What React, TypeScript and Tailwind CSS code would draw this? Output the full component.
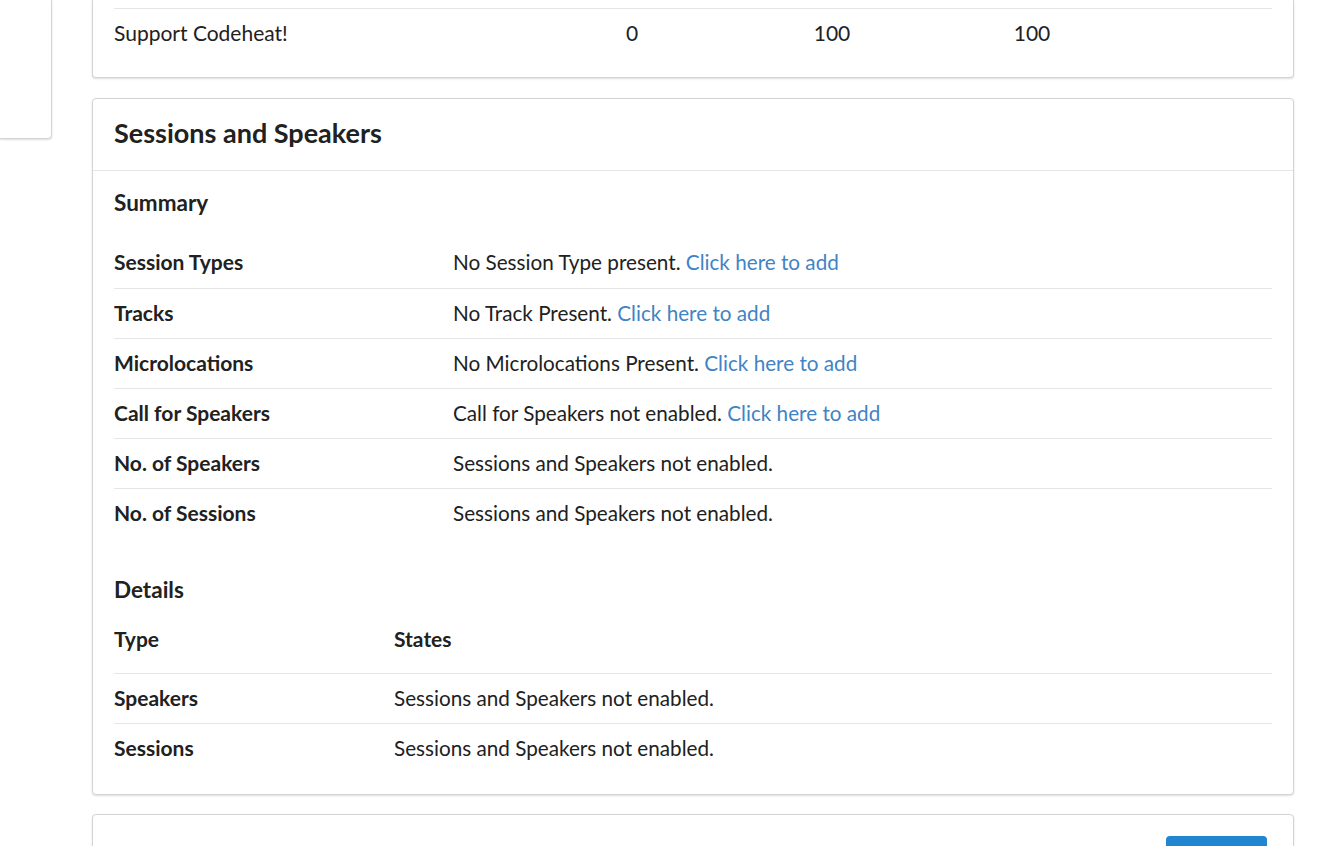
import React from 'react';

const summary: { label: string; text: string; link?: string }[] = [
  { label: 'Session Types', text: 'No Session Type present.', link: 'Click here to add' },
  { label: 'Tracks', text: 'No Track Present.', link: 'Click here to add' },
  { label: 'Microlocations', text: 'No Microlocations Present.', link: 'Click here to add' },
  { label: 'Call for Speakers', text: 'Call for Speakers not enabled.', link: 'Click here to add' },
  { label: 'No. of Speakers', text: 'Sessions and Speakers not enabled.' },
  { label: 'No. of Sessions', text: 'Sessions and Speakers not enabled.' },
];

const details = [
  { type: 'Speakers', state: 'Sessions and Speakers not enabled.' },
  { type: 'Sessions', state: 'Sessions and Speakers not enabled.' },
];

const card = 'bg-white border border-[#d4d4d5] shadow-[0_1px_2px_0_rgba(34,36,38,0.15)]';

export default function App() {
  return (
    <div
      className="flex h-[846px] w-[1342px] overflow-hidden bg-white text-[20.7px] leading-[28px] text-[#212121]"
      style={{ fontFamily: 'Lato, "Open Sans", sans-serif' }}
    >
      {/* sidebar, mostly scrolled out of view */}
      <div className="w-[52px] shrink-0">
        <div className={`${card} h-[139px] border-t-0 border-l-0 rounded-br-[4px]`} />
      </div>

      <div className="ml-[40px] w-[1202px] shrink-0">
        {/* sponsors table tail */}
        <div className={`${card} border-t-0 rounded-b-[4px] px-[21px] pt-[8px] pb-[19px]`}>
          <div className="grid h-[50px] grid-cols-[418px_200px_200px_200px_1fr] items-center border-t border-[#e6e6e6] pb-[2px] text-[21px]">
            <div>Support Codeheat!</div>
            <div className="text-center">0</div>
            <div className="text-center">100</div>
            <div className="text-center">100</div>
            <div />
          </div>
        </div>

        {/* sessions and speakers */}
        <div className={`${card} mt-[20px] rounded-[4px]`}>
          <div className="flex h-[72px] items-center border-b border-[#e6e6e6] px-[21px] pb-[5px]">
            <h2 className="text-[27px] font-bold leading-none">Sessions and Speakers</h2>
          </div>
          <div className="px-[21px] pb-[21px]">
            <h3 className="mt-[18px] mb-[21px] text-[22.5px] font-bold leading-[28px]">Summary</h3>
            <div>
              {summary.map((row, i) => (
                <div
                  key={row.label}
                  className={`flex h-[50px] items-center pb-[2px] ${i > 0 ? 'border-t border-[#e6e6e6]' : ''}`}
                >
                  <div className="w-[339px] shrink-0 text-[21px] font-bold">{row.label}</div>
                  <div>
                    {row.text}
                    {row.link && (
                      <>
                        {' '}
                        <a href="#" className="text-[#4183c4]">{row.link}</a>
                      </>
                    )}
                  </div>
                </div>
              ))}
            </div>

            <h3 className="mt-[38px] mb-[3px] text-[22.5px] font-bold leading-[28px]">Details</h3>
            <div>
              <div className="flex h-[66px] items-center pb-[2px] text-[21px] font-bold">
                <div className="w-[280px] shrink-0">Type</div>
                <div>States</div>
              </div>
              {details.map((row) => (
                <div key={row.type} className="flex h-[50px] items-center border-t border-[#e6e6e6] pb-[2px]">
                  <div className="w-[280px] shrink-0 text-[21px] font-bold">{row.type}</div>
                  <div>{row.state}</div>
                </div>
              ))}
            </div>
          </div>
        </div>

        {/* next card */}
        <div className={`${card} mt-[19px] h-[80px] rounded-[4px] flex justify-end pt-[21px] pr-[26px]`}>
          <button className="h-[40px] w-[101px] rounded-[4px] bg-[#2185d0] text-white font-bold" />
        </div>
      </div>
    </div>
  );
}
